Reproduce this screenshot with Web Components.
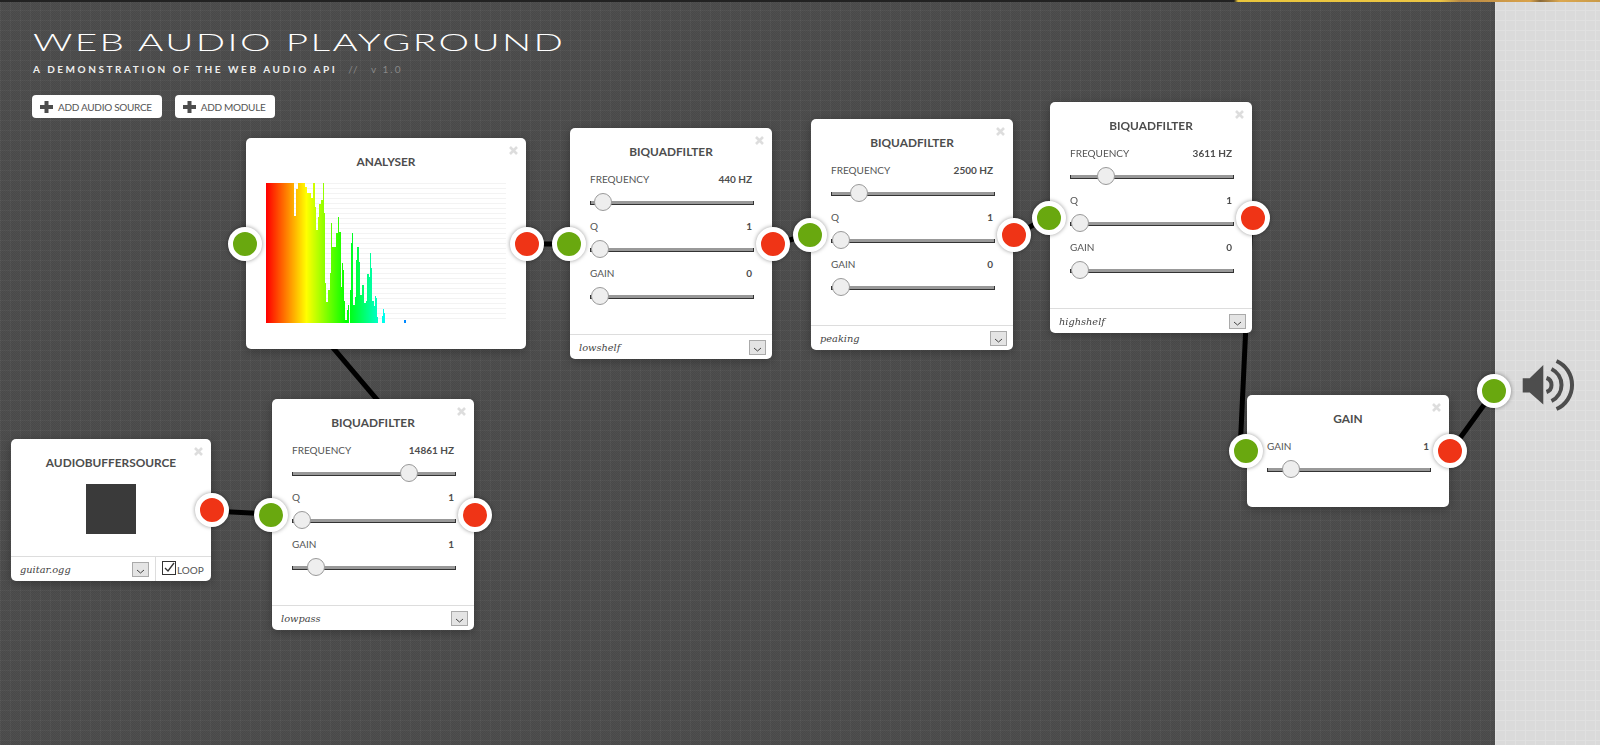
<!DOCTYPE html>
<html>
<head>
<meta charset="utf-8">
<title>Web Audio Playground</title>
<style>
  html, body { margin: 0; height: 100%; overflow: hidden; }
  body { font-family: Lato, "Liberation Sans", sans-serif; color: #555; }
</style>
</head>
<body>

<audio-playground>
  <play-header slot="header"></play-header>

  <audio-module slot="node" title="Analyser" style="left:246px;top:138px;width:280px;height:211px" in out>
    <analyser-view></analyser-view>
  </audio-module>

  <audio-module slot="node" title="BiquadFilter" style="left:570px;top:128px;width:202px;height:231px" in out>
    <param-row label="Frequency" value="440 Hz" pos="13"></param-row>
    <param-row label="Q" value="1" pos="10"></param-row>
    <param-row label="Gain" value="0" pos="10"></param-row>
    <module-footer slot="footer" select="lowshelf"></module-footer>
  </audio-module>

  <audio-module slot="node" title="BiquadFilter" style="left:811px;top:119px;width:202px;height:231px" in out>
    <param-row label="Frequency" value="2500 Hz" pos="28"></param-row>
    <param-row label="Q" value="1" pos="10"></param-row>
    <param-row label="Gain" value="0" pos="10"></param-row>
    <module-footer slot="footer" select="peaking"></module-footer>
  </audio-module>

  <audio-module slot="node" title="BiquadFilter" style="left:1050px;top:102px;width:202px;height:231px" in out>
    <param-row label="Frequency" value="3611 Hz" pos="36"></param-row>
    <param-row label="Q" value="1" pos="10"></param-row>
    <param-row label="Gain" value="0" pos="10"></param-row>
    <module-footer slot="footer" select="highshelf"></module-footer>
  </audio-module>

  <audio-module slot="node" title="BiquadFilter" style="left:272px;top:399px;width:202px;height:231px" in out>
    <param-row label="Frequency" value="14861 Hz" pos="117"></param-row>
    <param-row label="Q" value="1" pos="10"></param-row>
    <param-row label="Gain" value="1" pos="24"></param-row>
    <module-footer slot="footer" select="lowpass"></module-footer>
  </audio-module>

  <audio-module slot="node" title="AudioBufferSource" style="left:11px;top:439px;width:200px;height:142px" out>
    <play-square></play-square>
    <module-footer slot="footer" select="guitar.ogg" loop></module-footer>
  </audio-module>

  <audio-module slot="node" title="Gain" style="left:1247px;top:395px;width:202px;height:112px" in out>
    <param-row label="Gain" value="1" pos="24"></param-row>
  </audio-module>
</audio-playground>

<script>
// Dark canvas with the grid, the wires and the speaker column
class AudioPlayground extends HTMLElement {
  constructor() {
    super();
    this.attachShadow({ mode: 'open' });
    // [x1, y1, x2, y2] port centres
    const wires = [
      [212, 511, 271, 514],
      [474, 514, 245, 244],
      [527, 244, 569, 244],
      [773, 244, 810, 235],
      [1014, 235, 1049, 217],
      [1251, 217, 1240, 452],
      [1450, 452, 1494, 391]
    ];
    const lines = wires.map(w =>
      `<line x1="${w[0]}" y1="${w[1]}" x2="${w[2]}" y2="${w[3]}"/>`).join('');

    this.shadowRoot.innerHTML = `
      <style>
        :host {
          display: flex;
          position: relative;
          width: 1600px;
          height: 745px;
          overflow: hidden;
        }
        .stage {
          flex: 1;
          /* fine dither under the 10px grid */
          background:
            linear-gradient(rgba(255, 255, 255, 0.03) 1px, transparent 1px) 0 0 / 10px 10px,
            linear-gradient(90deg, rgba(255, 255, 255, 0.03) 1px, transparent 1px) 0 0 / 10px 10px,
            repeating-conic-gradient(#494949 0 25%, #4f4f4f 0 50%) 0 0 / 2px 2px;
        }
        .side {
          width: 105px;
          background-color: #dadada;
          background-image:
            linear-gradient(#e0e0e0 1px, transparent 1px),
            linear-gradient(90deg, #e0e0e0 1px, transparent 1px);
          background-size: 10px 10px;
        }
        .topline {
          position: absolute;
          left: 0; top: 0; right: 0;
          height: 2px;
          background: linear-gradient(90deg, #222 0, #222 1234px, #e9c53c 1238px, #ecc544 1440px, #b98a45 1460px, #d9a24a 1530px, #8a6a3a 1540px, #dca850 1560px, #c99a48 1600px);
        }
        svg.wires {
          position: absolute;
          left: 0; top: 0;
          width: 1600px;
          height: 745px;
        }
        svg.wires line { stroke: #000; stroke-width: 5; }
        .speaker {
          position: absolute;
          left: 1510px;
          top: 350px;
          width: 80px;
          height: 70px;
        }
        .speaker path { fill: none; stroke: #4d4d4d; stroke-width: 4; }
        .speaker path.cone { fill: #4d4d4d; stroke: none; }
        .out-port {
          position: absolute;
          left: 1477px;
          top: 374px;
        }
      </style>
      <div class="stage"><slot name="header"></slot></div>
      <div class="side"></div>
      <div class="topline"></div>
      <svg class="wires" viewBox="0 0 1600 745">${lines}</svg>
      <slot name="node"></slot>
      <audio-port class="out-port" kind="in"></audio-port>
      <svg class="speaker" viewBox="0 0 80 70">
        <path class="cone" d="M12.700 28.300h7L33.300 15v39.500L19.700 42.500h-7z"/>
        <path d="M36.500 28A7.400 7.400 0 0 1 36.500 42"/>
        <path d="M41.500 19A17.800 17.800 0 0 1 41.500 51"/>
        <path d="M46.500 11A26.300 26.300 0 0 1 46.500 59"/>
      </svg>
    `;
  }
}

// Title block and the two add buttons
class PlayHeader extends HTMLElement {
  constructor() {
    super();
    this.attachShadow({ mode: 'open' });
    this.shadowRoot.innerHTML = `
      <style>
        :host {
          display: flex;
          flex-direction: column;
          padding: 26px 0 0 33px;
          color: #fff;
        }
        h1 {
          margin: 0;
          font: 300 24px/32px Lato, sans-serif;
          letter-spacing: 1.5px;
          white-space: nowrap;
          transform: scaleX(1.61);
          transform-origin: 0 0;
        }
        .sub {
          margin: 4px 0 0 0;
          font: 700 10px/14px Lato, sans-serif;
          letter-spacing: 2.55px;
          white-space: nowrap;
          color: #eee;
        }
        .sub span { color: #888; font-weight: 400; }
        .sub .slashes { margin-left: 6px; }
        .sub .version { margin-left: 6px; letter-spacing: 2px; }
        .buttons { display: flex; gap: 13px; margin-top: 19px; margin-left: -1px; }
        button {
          display: flex;
          align-items: center;
          gap: 5px;
          height: 23px;
          padding: 0 10px 0 8px;
          border: 0;
          border-radius: 4px;
          background: #fff;
          color: #555;
          font: 400 10px Lato, sans-serif;
          letter-spacing: -0.3px;
        }
        svg { width: 13px; height: 12px; fill: #4d4d4d; }
      </style>
      <h1>WEB AUDIO PLAYGROUND</h1>
      <p class="sub">A DEMONSTRATION OF THE WEB AUDIO API <span class="slashes">//</span> <span class="version">v 1.0</span></p>
      <div class="buttons">
        <button><svg viewBox="0 0 13 12"><path d="M4.500 0h4v4H13v4H8.500v4h-4V8H0V4h4.500z"/></svg>ADD AUDIO SOURCE</button>
        <button><svg viewBox="0 0 13 12"><path d="M4.500 0h4v4H13v4H8.500v4h-4V8H0V4h4.500z"/></svg>ADD MODULE</button>
      </div>
    `;
  }
}

class AudioPort extends HTMLElement {
  constructor() {
    super();
    this.attachShadow({ mode: 'open' });
    const color = this.getAttribute('kind') === 'in' ? '#69a80f' : '#ef3416';
    this.shadowRoot.innerHTML = `
      <style>
        :host {
          display: block;
          width: 24px;
          height: 24px;
          border: 5px solid #fff;
          border-radius: 50%;
          background: ${color};
          box-shadow: 0 0 4px rgba(0, 0, 0, 0.4);
        }
      </style>
    `;
  }
}

// White card on the canvas: title, close cross, body and footer slots, ports on the edges
class AudioModule extends HTMLElement {
  constructor() {
    super();
    this.attachShadow({ mode: 'open' });
    const title = this.getAttribute('title').toUpperCase();
    this.removeAttribute('title');
    this.shadowRoot.innerHTML = `
      <style>
        :host {
          display: flex;
          flex-direction: column;
          position: absolute;
          box-sizing: border-box;
          background: #fff;
          border-radius: 5px;
          box-shadow: 0 2px 10px rgba(0, 0, 0, 0.3);
          color: #555;
        }
        h6 {
          margin: 17px 0 0 0;
          text-align: center;
          font: 700 11.850px/14px Lato, sans-serif;
          color: #4d4d4d;
        }
        .close {
          position: absolute;
          right: 8px;
          top: 8px;
          width: 9px;
          height: 9px;
          stroke: #ddd;
          stroke-width: 2.600;
        }
        .body { flex: 1; min-height: 0; display: flex; flex-direction: column; padding: 13px 20px 0; }
        audio-port { position: absolute; top: 50%; margin-top: -17px; }
        .in { left: -18px; }
        .out { right: -18px; }
      </style>
      <svg class="close" viewBox="0 0 9 9"><path d="M1 1l7 7M8 1l-7 7"/></svg>
      <h6>${title}</h6>
      <div class="body"><slot></slot></div>
      <slot name="footer"></slot>
      ${this.hasAttribute('in') ? '<audio-port class="in" kind="in"></audio-port>' : ''}
      ${this.hasAttribute('out') ? '<audio-port class="out" kind="out"></audio-port>' : ''}
    `;
  }
}

// Label, value and the slider under them
class ParamRow extends HTMLElement {
  constructor() {
    super();
    this.attachShadow({ mode: 'open' });
    const pos = this.getAttribute('pos') || 10;
    this.shadowRoot.innerHTML = `
      <style>
        :host { display: block; height: 47px; }
        .top {
          display: flex;
          justify-content: space-between;
          font: 400 10px/14px Lato, sans-serif;
          color: #555;
        }
        b { font-weight: 700; color: #4d4d4d; }
        .track {
          position: relative;
          margin-top: 15px;
          width: 164px;
          height: 4px;
          box-sizing: border-box;
          background: #999;
          border: solid #333;
          border-width: 0 1px 1px 1px;
        }
        .thumb {
          position: absolute;
          left: ${pos}px;
          top: -8px;
          margin-left: -10px;
          width: 16px;
          height: 16px;
          border: 1px solid #999;
          border-radius: 50%;
          background: #eee;
        }
      </style>
      <div class="top"><span>${this.getAttribute('label').toUpperCase()}</span><b>${this.getAttribute('value').toUpperCase()}</b></div>
      <div class="track"><div class="thumb"></div></div>
    `;
  }
}

// Footer strip: type select and, on a source, the loop checkbox
class ModuleFooter extends HTMLElement {
  constructor() {
    super();
    this.attachShadow({ mode: 'open' });
    const loop = this.hasAttribute('loop') ? `
      <div class="loop">
        <svg viewBox="0 0 14 14"><rect x="0.500" y="0.500" width="13" height="13" fill="#fff" stroke="#333"/><path d="M3 7l3 3 6-8" fill="none" stroke="#333" stroke-width="1.300"/></svg>
        <span>LOOP</span>
      </div>` : '';
    this.shadowRoot.innerHTML = `
      <style>
        :host {
          display: flex;
          height: 24px;
          border-top: 1px solid #ddd;
        }
        .select {
          flex: 1;
          display: flex;
          align-items: center;
          justify-content: space-between;
          padding: 0 6px 0 9px;
          font: italic 400 9.800px "DejaVu Serif", serif;
          color: #444;
        }
        .arrow {
          box-sizing: border-box;
          width: 17px;
          height: 15px;
          border: 1px solid #aaa;
          background: #e4e4e4;
          stroke: #444;
          fill: none;
        }
        .loop {
          display: flex;
          align-items: flex-start;
          gap: 1px;
          width: 56px;
          box-sizing: border-box;
          padding: 4px 0 0 6px;
          border-left: 1px solid #ddd;
          font: 400 10px/18px Lato, sans-serif;
          color: #555;
        }
        .loop svg { width: 14px; height: 14px; flex: none; }
      </style>
      <div class="select">
        <span>${this.getAttribute('select')}</span>
        <svg class="arrow" viewBox="0 0 15 13"><path d="M4 7l3.500 3L11 7"/></svg>
      </div>
      ${loop}
    `;
  }
}

class PlaySquare extends HTMLElement {
  constructor() {
    super();
    this.attachShadow({ mode: 'open' });
    this.shadowRoot.innerHTML = `
      <style>
        :host { display: block; width: 50px; height: 50px; margin: 1px auto 0; background: #3a3a3a; }
      </style>
    `;
  }
}

// Spectrum frozen on one frame
class AnalyserView extends HTMLElement {
  constructor() {
    super();
    this.attachShadow({ mode: 'open' });
    this.shadowRoot.innerHTML = `
      <style>
        :host { display: block; width: 240px; height: 140px; margin-top: 1px; }
        canvas { display: block; }
      </style>
      <canvas width="240" height="140"></canvas>
    `;
  }

  connectedCallback() {
    const ctx = this.shadowRoot.querySelector('canvas').getContext('2d');
    ctx.fillStyle = '#f3f3f3';
    for (let y = 0; y < 140; y += 5) ctx.fillRect(0, y, 240, 1);

    // [first column, last column, bar height]
    const spans = [
      [0, 27, 140], [28, 29, 107], [30, 31, 134], [32, 38, 140], [39, 40, 136], [41, 44, 130],
      [45, 46, 125], [47, 48, 140], [49, 49, 116], [50, 51, 93], [52, 52, 106], [53, 54, 119],
      [55, 56, 123], [57, 57, 140], [58, 58, 110], [59, 59, 40], [60, 61, 21], [62, 63, 33],
      [64, 64, 50], [65, 65, 100], [66, 67, 76], [68, 69, 76], [70, 71, 90], [72, 72, 106],
      [73, 74, 91], [75, 75, 36], [76, 76, 60], [77, 77, 53], [78, 78, 22], [79, 80, 3],
      [81, 81, 13], [82, 82, 18], [83, 83, 0], [84, 84, 33], [85, 85, 80], [86, 86, 90],
      [87, 88, 18], [89, 89, 26], [90, 90, 63], [91, 92, 76], [93, 93, 61], [94, 95, 28],
      [96, 97, 38], [98, 99, 20], [100, 100, 22], [101, 102, 49], [103, 103, 46], [104, 104, 70],
      [105, 105, 55], [106, 107, 22], [108, 108, 17], [109, 109, 27], [110, 110, 25], [111, 111, 6],
      [116, 116, 7], [117, 117, 14], [118, 118, 10], [138, 139, 3]
    ];
    spans.forEach(([from, to, h]) => {
      for (let x = from; x <= to; x++) {
        ctx.fillStyle = `hsl(${x * 1.5}, 100%, 50%)`;
        ctx.fillRect(x, 140 - h, 1, h);
      }
    });
  }
}

customElements.define('audio-port', AudioPort);
customElements.define('play-header', PlayHeader);
customElements.define('param-row', ParamRow);
customElements.define('module-footer', ModuleFooter);
customElements.define('play-square', PlaySquare);
customElements.define('analyser-view', AnalyserView);
customElements.define('audio-module', AudioModule);
customElements.define('audio-playground', AudioPlayground);
</script>
</body>
</html>
